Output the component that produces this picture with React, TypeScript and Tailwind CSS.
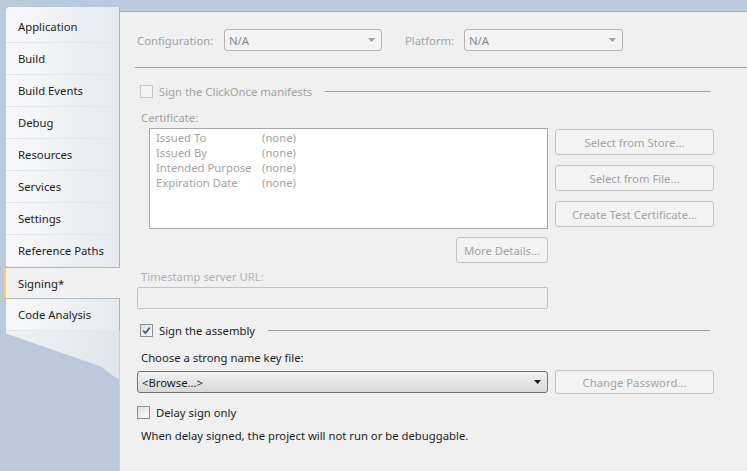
const tabs = [
  "Application",
  "Build",
  "Build Events",
  "Debug",
  "Resources",
  "Services",
  "Settings",
  "Reference Paths",
  "Signing*",
  "Code Analysis",
];

// ── Small pieces ──────────────────────────────────────────────────────────────
function Arrow({ dark }: { dark?: boolean }) {
  return (
    <svg width="7" height="4" viewBox="0 0 7 4" className="shrink-0">
      <path d="M0 0h7L3.5 4z" fill={dark ? "#1a1a1a" : "#9c9c9c"} />
    </svg>
  );
}

function CheckBox({ checked, disabled }: { checked?: boolean; disabled?: boolean }) {
  if (disabled) {
    return <div className="h-[13px] w-[13px] shrink-0 border border-[#c6c6c6] bg-[#f4f4f4]" />;
  }
  return (
    <div className="flex h-[13px] w-[13px] shrink-0 items-center justify-center border border-[#8e8f8f] bg-linear-to-br from-[#dedede] to-[#fbfbfb]">
      {checked && (
        <svg width="9" height="9" viewBox="0 0 9 9">
          <path d="M1.2 4.6 3.4 7 7.8 1.6" fill="none" stroke="#4a5f98" strokeWidth={1.8} />
        </svg>
      )}
    </div>
  );
}

function DisabledButton({ label, className }: { label: string; className: string }) {
  return (
    <div
      className={
        "flex items-center justify-center rounded-[3px] border border-[#c3c3c3] bg-[#f3f3f3] text-[#a3a3a3] " +
        className
      }
    >
      {label}
    </div>
  );
}

// ── Page ──────────────────────────────────────────────────────────────────────
export default function App() {
  return (
    <div className="flex h-[471px] w-[747px] overflow-hidden bg-[#bcc9da] font-['Segoe_UI','Noto_Sans',sans-serif] text-[11.3px] leading-[15px] text-[#1e1e1e]">
      {/* Tab column */}
      <div className="flex w-[120px] shrink-0 flex-col pl-[6px] pt-[7px]">
        {tabs.map((t, i) =>
          t === "Signing*" ? (
            <div
              key={t}
              className="-ml-[2px] flex h-[32px] items-center border-y border-l-2 border-y-[#b3b9c3] border-l-[#f2cf72] bg-[#f0f0f0] pl-[12px]"
            >
              {t}
            </div>
          ) : (
            <div
              key={t}
              className={
                i === 0
                  ? "flex h-[36px] items-center rounded-tl-[4px] border-r border-b border-r-[#a9b0ba] border-b-[#e3e6ea] bg-linear-to-r from-[#f7f8f9] to-[#e6eaef] pl-[12px] pt-[4px]"
                  : "flex h-[32px] items-center border-r border-b border-r-[#a9b0ba] border-b-[#e3e6ea] bg-linear-to-r from-[#f7f8f9] to-[#e6eaef] pl-[12px]"
              }
            >
              {t}
            </div>
          ),
        )}
        <div className="flex-1 border-r border-r-[#c9d1dc]">
          <div className="h-[48px] bg-linear-to-r from-[#eff1f4] to-[#e1e6ec] [clip-path:polygon(0_0,100%_0,100%_100%,95%_94%,84%_74%,0_5%)]" />
        </div>
      </div>

      {/* Content panel */}
      <div className="mt-[11px] flex flex-1 flex-col border-t border-t-[#a8aeb7] bg-[#f0f0f0]">
        {/* Configuration / Platform */}
        <div className="mt-[17px] flex h-[22px] items-center pl-[17px] text-[#a3a3a3]">
          <span className="w-[87px]">Configuration:</span>
          <div className="flex h-[22px] w-[158px] items-center justify-between rounded-[3px] border border-[#b5b5b5] bg-[#f3f3f3] pl-[4px] pr-[6px] text-[#8a8a8a]">
            N/A
            <Arrow />
          </div>
          <span className="ml-[23px] w-[59px]">Platform:</span>
          <div className="flex h-[22px] w-[159px] items-center justify-between rounded-[3px] border border-[#b5b5b5] bg-[#f3f3f3] pl-[4px] pr-[6px] text-[#8a8a8a]">
            N/A
            <Arrow />
          </div>
        </div>

        <div className="ml-[15px] mt-[16px] h-px bg-[#a0a0a0]" />

        {/* ClickOnce */}
        <div className="mt-[15px] flex h-[16px] items-center pl-[20px] pr-[37px] text-[#a3a3a3]">
          <CheckBox disabled />
          <span className="ml-[6px]">Sign the ClickOnce manifests</span>
          <div className="ml-[13px] h-px flex-1 bg-[#a0a0a0]" />
        </div>

        <div className="mt-[10px] flex h-[16px] items-center pl-[21px] text-[#a3a3a3]">Certificate:</div>

        <div className="mt-[3px] flex">
          <div className="ml-[29px] h-[101px] w-[399px] border border-[#a6a6a6] bg-white pl-[6px] pt-[1px] text-[#a3a3a3]">
            {[
              ["Issued To", "(none)"],
              ["Issued By", "(none)"],
              ["Intended Purpose", "(none)"],
              ["Expiration Date", "(none)"],
            ].map(([k, v]) => (
              <div key={k} className="flex h-[15px] items-center">
                <span className="w-[106px]">{k}</span>
                <span>{v}</span>
              </div>
            ))}
          </div>
          <div className="ml-[7px] mt-[1px] flex flex-col gap-[10px]">
            <DisabledButton label="Select from Store..." className="h-[26px] w-[159px]" />
            <DisabledButton label="Select from File..." className="h-[26px] w-[159px]" />
            <DisabledButton label="Create Test Certificate..." className="h-[26px] w-[159px]" />
          </div>
        </div>

        <div className="mt-[8px] flex">
          <DisabledButton label="More Details..." className="ml-[336px] h-[26px] w-[92px]" />
        </div>

        <div className="mt-[5px] flex h-[16px] items-center pl-[21px] text-[#b2b2b2]">Timestamp server URL:</div>
        <div className="ml-[17px] mt-[3px] h-[22px] w-[411px] rounded-[2px] border border-[#c4c4c4] bg-[#f0f0f0]" />

        {/* Strong name */}
        <div className="mt-[13px] flex h-[16px] items-center pl-[20px] pr-[37px]">
          <CheckBox checked />
          <span className="ml-[6px]">Sign the assembly</span>
          <div className="ml-[13px] h-px flex-1 bg-[#a0a0a0]" />
        </div>

        <div className="mt-[11px] flex h-[16px] items-center pl-[21px]">Choose a strong name key file:</div>

        <div className="mt-[5px] flex h-[24px] items-center">
          <div className="ml-[17px] flex h-[22px] w-[411px] items-center justify-between rounded-[3px] border border-[#707070] bg-linear-to-b from-[#f2f2f2] to-[#d9d9d9] pl-[4px] pr-[6px]">
            &lt;Browse...&gt;
            <Arrow dark />
          </div>
          <DisabledButton label="Change Password..." className="ml-[7px] h-[24px] w-[159px]" />
        </div>

        <div className="mt-[10px] flex h-[16px] items-center pl-[17px]">
          <CheckBox />
          <span className="ml-[6px]">Delay sign only</span>
        </div>

        <div className="mt-[7px] flex h-[16px] items-center pl-[21px]">
          When delay signed, the project will not run or be debuggable.
        </div>
      </div>
    </div>
  );
}
